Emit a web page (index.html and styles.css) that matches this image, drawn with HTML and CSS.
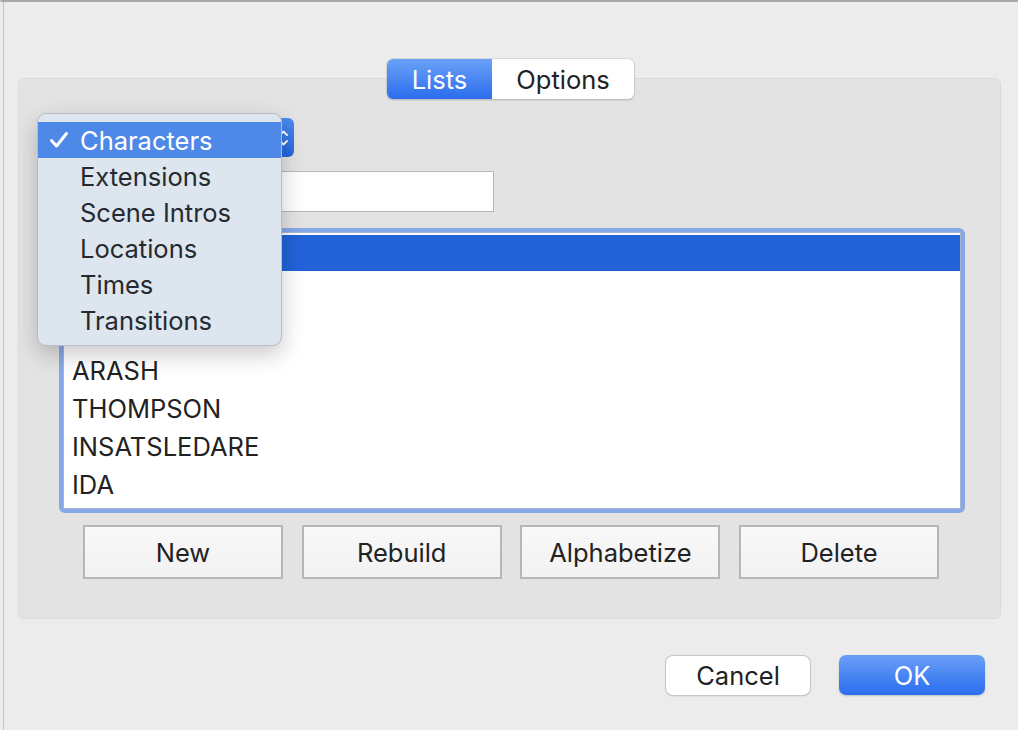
FILE: index.html
```html
<!DOCTYPE html>
<html>
<head>
<meta charset="utf-8">
<link rel="stylesheet" href="styles.css">
</head>
<body>
<div class="window">
  <div class="group">
    <div class="tabs">
      <div class="seg seg-on">Lists</div>
      <div class="seg">Options</div>
    </div>
    <div class="popup-row">
      <div class="popup">
        <svg class="chev" width="10" height="20" viewBox="0 0 10 20"><path d="M2 7 L5.5 3.5 L9 7 M2 13 L5.5 16.5 L9 13" fill="none" stroke="#fff" stroke-width="1.8" stroke-linecap="round" stroke-linejoin="round"/></svg>
      </div>
      <div class="menu">
        <div class="item item-on"><span class="check"><svg width="20" height="18" viewBox="0 0 20 18"><path d="M2.5 9.5 L7.5 15 L17.5 2.5" fill="none" stroke="#fff" stroke-width="3" stroke-linecap="round" stroke-linejoin="round"/></svg></span>Characters</div>
        <div class="item"><span class="check"></span>Extensions</div>
        <div class="item"><span class="check"></span>Scene Intros</div>
        <div class="item"><span class="check"></span>Locations</div>
        <div class="item"><span class="check"></span>Times</div>
        <div class="item"><span class="check"></span>Transitions</div>
      </div>
    </div>
    <div class="field"></div>
    <div class="list">
      <div class="list-inner">
        <div class="row row-on"></div>
        <div class="row"></div>
        <div class="row"></div>
        <div class="row">ARASH</div>
        <div class="row">THOMPSON</div>
        <div class="row">INSATSLEDARE</div>
        <div class="row">IDA</div>
      </div>
    </div>
    <div class="actions">
      <div class="btn">New</div>
      <div class="btn">Rebuild</div>
      <div class="btn">Alphabetize</div>
      <div class="btn">Delete</div>
    </div>
  </div>
  <div class="footer">
    <div class="pbtn cancel">Cancel</div>
    <div class="pbtn ok">OK</div>
  </div>
</div>
</body>
</html>
```
FILE: styles.css
```css
html, body {
  margin: 0;
  padding: 0;
  background: #ececec;
  font-family: "Inter", "Liberation Sans", sans-serif;
  color: #262626;
}
.window {
  width: 1018px;
  height: 730px;
  box-sizing: border-box;
  border-top: 2px solid #a9a9a9;
  border-left: 1px solid #ececec;
  position: relative;
  overflow: hidden;
}
.window::before {
  content: "";
  position: absolute;
  left: 2px;
  top: 0;
  bottom: 0;
  width: 1px;
  background: #c4c4c4;
}
.group {
  margin: 76px 0 0 17px;
  width: 983px;
  height: 541px;
  box-sizing: border-box;
  background: #e3e3e3;
  border: 1px solid #dadada;
  border-radius: 6px;
}
.tabs {
  display: flex;
  width: 247px;
  height: 40px;
  margin: -20px 0 0 368px;
  border-radius: 6px;
  background: #fff;
  box-shadow: 0 0 0 0.5px #c4c4c4, 0 1px 2px rgba(0,0,0,0.25);
  overflow: hidden;
  font-size: 25.5px;
}
.seg {
  flex: 1;
  display: flex;
  align-items: center;
  justify-content: center;
  color: #222;
}
.seg-on {
  flex: 0 0 105px;
  color: #fff;
  background: linear-gradient(#6aa2f7, #2b6ded);
}
.popup-row {
  position: relative;
  margin: 19px 0 0 21px;
  height: 39px;
}
.popup {
  width: 254px;
  height: 39px;
  box-sizing: border-box;
  border-radius: 6px;
  background: linear-gradient(#4c8cf0, #2564de);
  display: flex;
  align-items: center;
  justify-content: flex-end;
  padding: 0 6px 0 40px;
}
.chev { margin-top: 1px; }
.menu {
  position: absolute;
  left: -3px;
  top: -5px;
  width: 245px;
  height: 233px;
  box-sizing: border-box;
  padding-top: 8px;
  background: #dde5ee;
  border: 1px solid #b9bdc3;
  border-radius: 9px;
  box-shadow: 0 8px 22px rgba(0,0,0,0.22);
  z-index: 5;
}
.item {
  height: 36px;
  display: flex;
  align-items: center;
  font-size: 25.5px;
  color: #262a30;
}
.check {
  width: 42px;
  padding-left: 11px;
  box-sizing: border-box;
  display: flex;
  align-items: center;
}
.item-on {
  background: #4f89e7;
  color: #fff;
}
.field {
  margin: 14px 0 0 161px;
  width: 314px;
  height: 41px;
  box-sizing: border-box;
  background: #fff;
  border: 1px solid #b7b7b7;
}
.list {
  margin: 16px 0 0 40px;
  width: 906px;
  height: 285px;
  box-sizing: border-box;
  border: 4px solid #86a8e7;
  border-radius: 6px;
}
.list-inner {
  height: 100%;
  box-sizing: border-box;
  background: #fff;
  border: 1px solid #a8b6d0;
  padding-top: 2px;
  display: flex;
  flex-direction: column;
  gap: 2px;
}
.row {
  height: 36px;
  flex: none;
  box-sizing: border-box;
  display: flex;
  align-items: center;
  padding: 7px 0 0 8px;
  font-size: 25.5px;
  color: #222;
}
.row-on { background: #2263d8; }
.actions {
  margin: 12px 0 0 64px;
  display: grid;
  grid-template-columns: repeat(4, 200px);
  column-gap: 18.7px;
}
.btn {
  height: 54px;
  box-sizing: border-box;
  border: 2px solid #b6b6b6;
  background: linear-gradient(#f8f8f8, #f2f2f2);
  display: flex;
  align-items: center;
  justify-content: center;
  font-size: 25.5px;
  color: #222;
}
.footer {
  display: flex;
  justify-content: flex-end;
  gap: 29px;
  margin: 37px 33px 0 0;
}
.pbtn {
  height: 39px;
  box-sizing: border-box;
  border-radius: 7px;
  display: flex;
  align-items: center;
  justify-content: center;
  font-size: 25.5px;
}
.cancel {
  width: 144px;
  background: #fff;
  color: #222;
  box-shadow: 0 0 0 1px #c6c6c6, 0 1px 2px rgba(0,0,0,0.2);
}
.ok {
  width: 146px;
  height: 40px;
  margin-top: -1px;
  color: #fff;
  background: linear-gradient(#6a9ff6, #2a6def);
  box-shadow: 0 1px 2px rgba(0,0,0,0.2);
}
```
